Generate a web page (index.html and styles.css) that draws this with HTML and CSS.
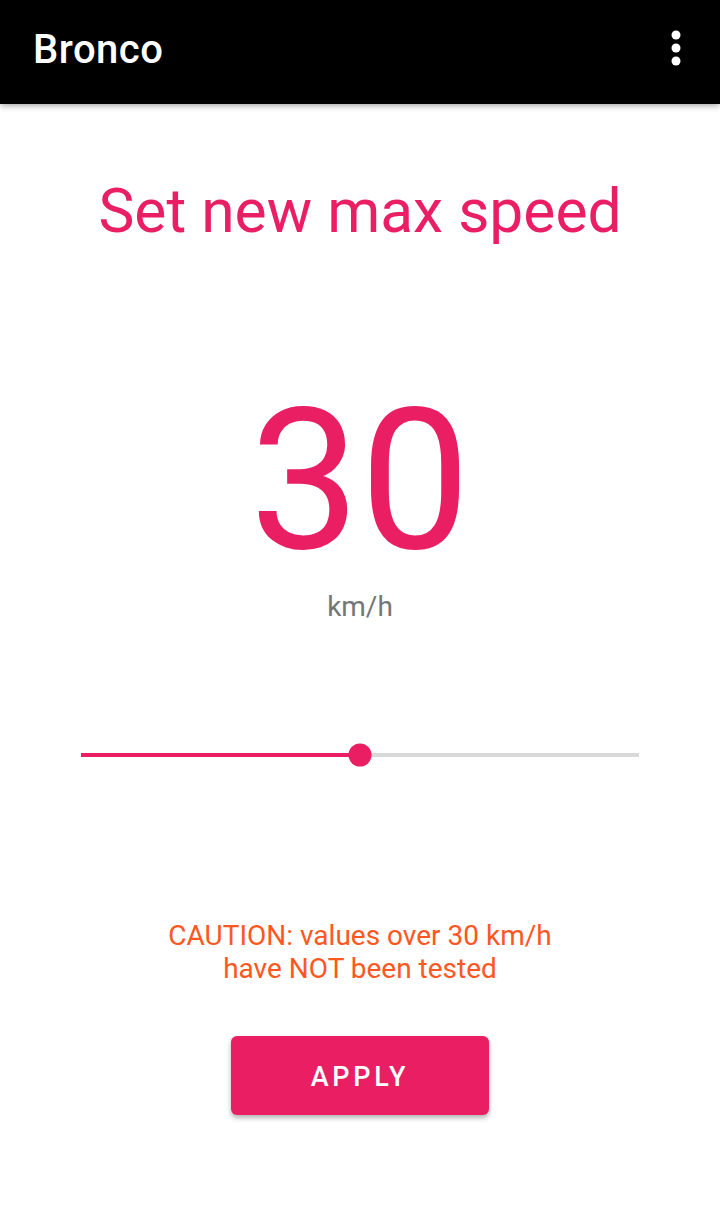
FILE: index.html
```html
<!DOCTYPE html>
<html>
<head>
<meta charset="utf-8">
<link rel="stylesheet" href="styles.css">
</head>
<body>
<div class="app">
  <header class="toolbar">
    <div class="title">Bronco</div>
    <div class="menu">
      <svg width="12" height="36" viewBox="0 0 12 36"><circle cx="6" cy="5" r="4.5" fill="#fff"/><circle cx="6" cy="18" r="4.5" fill="#fff"/><circle cx="6" cy="31" r="4.5" fill="#fff"/></svg>
    </div>
  </header>
  <main class="content">
    <h1 class="heading">Set new max speed</h1>
    <div class="value">30</div>
    <div class="unit">km/h</div>
    <div class="slider">
      <div class="track"><div class="fill" style="width:50%"></div><div class="thumb" style="left:50%"></div></div>
    </div>
    <p class="caution">CAUTION: values over 30 km/h<br>have NOT been tested</p>
    <button class="apply">APPLY</button>
  </main>
</div>
</body>
</html>
```
FILE: styles.css
```css
* { box-sizing: border-box; }
html, body { margin: 0; padding: 0; background: #fff; }
body { font-family: Roboto, "Noto Sans", sans-serif; width: 720px; height: 1224px; overflow: hidden; }
.app { display: flex; flex-direction: column; height: 1224px; }
.toolbar {
  height: 104px; background: #000; display: flex; align-items: center;
  justify-content: space-between; padding: 0 38px 0 33px;
  box-shadow: 0 2px 6px rgba(0,0,0,0.35); position: relative; z-index: 1;
}
.title { color: #fff; font-size: 40px; font-weight: 500; letter-spacing: 0.5px; margin-top: -6px; }
.menu { display: flex; margin-top: -8px; }
.content { display: flex; flex-direction: column; align-items: center; }
.heading {
  margin: 74px 0 0; font-weight: 400; font-size: 60.5px; line-height: 68px;
  color: #E91E63;
}
.value {
  margin-top: 135px; font-size: 196px; line-height: 200px; color: #E91E63; font-weight: 400;
}
.unit { margin-top: 11px; font-size: 28px; line-height: 30px; color: #757575; }
.slider { width: 558px; margin-top: 122px; height: 22px; display: flex; align-items: center; }
.track { position: relative; width: 100%; height: 4px; background: #D9D9D9; }
.fill { height: 4px; background: #E91E63; }
.thumb {
  position: absolute; top: 50%; width: 23px; height: 23px; border-radius: 50%;
  background: #E91E63; transform: translate(-50%, -50%);
}
.caution {
  margin: 153px 0 0; text-align: center; font-size: 28px; line-height: 33px; color: #FF5722;
}
.apply {
  margin-top: 51px; width: 258px; height: 79px; border: 0; border-radius: 6px;
  background: #E91E63; color: #fff; font-family: Roboto, sans-serif; font-weight: 500;
  font-size: 27px; letter-spacing: 3.7px; box-shadow: 0 3px 5px rgba(0,0,0,0.3);
  padding: 2px 0 0;
}
```
